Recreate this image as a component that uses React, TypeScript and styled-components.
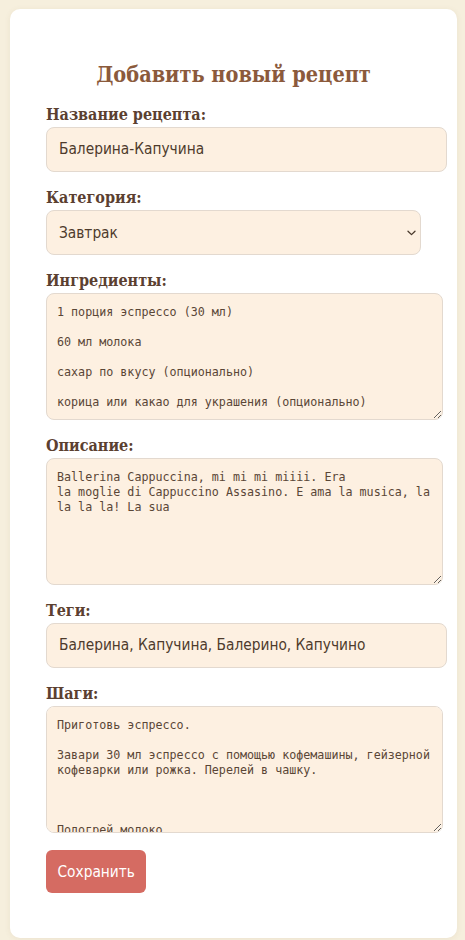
import React from "react";
import styled, { createGlobalStyle } from "styled-components";

const Global = createGlobalStyle`
  html, body { margin: 0; padding: 0; }
  body {
    background: #f6efdd;
    padding: 9px 8px 2px 10px;
    font-family: "DejaVu Serif", Georgia, serif;
  }
`;

const Card = styled.div`
  background: #ffffff;
  border-radius: 10px;
  box-shadow: 0 1px 6px rgba(120, 90, 40, 0.08);
  padding: 36px 36px 45px 36px;
`;

const Title = styled.h2`
  margin: 16px 0 16px 0;
  text-align: center;
  font-family: "DejaVu Serif Condensed", "DejaVu Serif", Georgia, serif;
  font-stretch: condensed;
  font-weight: bold;
  font-size: 21.5px;
  line-height: 28px;
  color: #8b5a3c;
`;

const Form = styled.form`
  display: flex;
  flex-direction: column;
  gap: 16px;
`;

const Field = styled.div`
  display: flex;
  flex-direction: column;
  align-items: flex-start;
  gap: 2px;
`;

const Label = styled.label`
  font-family: "DejaVu Serif Condensed", "DejaVu Serif", Georgia, serif;
  font-stretch: condensed;
  font-weight: bold;
  font-size: 16px;
  line-height: 20px;
  color: #5b4030;
`;

const controlBase = `
  background: #fdf0e1;
  border: 1px solid #e3d9cf;
  border-radius: 8px;
  color: #4e3b2c;
  outline: none;
  margin: 0;
`;

const TextInput = styled.input`
  ${controlBase}
  box-sizing: content-box;
  width: 100%;
  padding: 12px;
  height: 19px;
  font-family: "DejaVu Sans Condensed", "Liberation Sans", sans-serif;
  font-size: 15.3px;
  line-height: 19px;
`;

const SelectWrap = styled.div`
  position: relative;
  width: 100%;
`;

const Select = styled.select`
  ${controlBase}
  appearance: none;
  -webkit-appearance: none;
  box-sizing: border-box;
  display: block;
  width: 100%;
  height: 45px;
  padding: 0 24px 0 12px;
  font-family: "DejaVu Sans Condensed", "Liberation Sans", sans-serif;
  font-size: 15.3px;
`;

const Chevron = styled.svg`
  position: absolute;
  right: 5px;
  top: 20px;
  width: 9px;
  height: 6px;
  pointer-events: none;
`;

const TextArea = styled.textarea<{ $scroll?: boolean }>`
  ${controlBase}
  display: block;
  box-sizing: border-box;
  width: calc(100% + 22px);
  height: 127px;
  padding: 11px ${(p) => (p.$scroll ? "4px" : "10px")} 9px 10px;
  font-family: "DejaVu Sans Mono", "Liberation Mono", monospace;
  font-size: 11.7px;
  line-height: 15px;
  color: #5a4636;
  resize: vertical;
  overflow-y: ${(p) => (p.$scroll ? "scroll" : "auto")};

  &::-webkit-scrollbar {
    width: 6px;
  }
  &::-webkit-scrollbar-track {
    background: transparent;
    margin: 11px 0;
  }
  &::-webkit-scrollbar-thumb {
    background: #ddd1c3;
    border-radius: 2px;
    border-left: 2px solid transparent;
    border-right: 1px solid transparent;
    background-clip: padding-box;
  }
  &::-webkit-scrollbar-corner {
    background: transparent;
  }
`;

const SaveButton = styled.button`
  align-self: flex-start;
  margin-top: 1px;
  background: #d56b62;
  color: #ffffff;
  border: none;
  border-radius: 6px;
  height: 43px;
  padding: 0 11.5px;
  font-family: "DejaVu Sans Condensed", "Liberation Sans", sans-serif;
  font-size: 15.3px;
  cursor: pointer;
`;

const ingredients =
  "1 порция эспрессо (30 мл)\n\n60 мл молока\n\nсахар по вкусу (опционально)\n\nкорица или какао для украшения (опционально)";

const description =
  "Ballerina Cappuccina, mi mi mi miiii. Era\nla moglie di Cappuccino Assasino. E ama la musica, la la la la! La sua";

const steps = [
  "Приготовь эспрессо.",
  "",
  "Завари 30 мл эспрессо с помощью кофемашины, гейзерной кофеварки или рожка. Перелей в чашку.",
  "",
  "",
  "",
  "Подогрей молоко.",
  "",
  "Нагрей 60 мл молока до 60–65 °C, не доводя до кипения.",
  "",
  "",
  "",
  "Взбей молоко.",
  "",
  "Используй капучинатор, френч-пресс или венчик, чтобы получить густую пену.",
  "",
  "",
  "",
  "Соедини.",
  "",
  "Аккуратно влей горячее молоко в эспрессо, придерживая пену ложкой, затем выложи пену сверху.",
  "",
  "",
  "",
  "Добавь сахар.",
  "",
  "По желанию подсласти напиток и перемешай.",
  "",
  "",
  "",
  "Укрась.",
  "",
  "Посыпь корицей или какао. Подавай сразу.",
  "",
  "",
  "",
  "Наслаждайся.",
  "",
  "Ballerina Cappuccina готова! Mi mi mi miiii.",
  "",
  "",
  "",
  "",
  "",
  "",
  "",
  "",
  "",
  "",
  "",
  "",
  "",
  "",
  "",
  "",
].join("\n");

export default function App() {
  return (
    <>
      <Global />
      <Card>
        <Title>Добавить новый рецепт</Title>
        <Form onSubmit={(e) => e.preventDefault()}>
          <Field>
            <Label>Название рецепта:</Label>
            <TextInput defaultValue="Балерина-Капучина" spellCheck={false} />
          </Field>
          <Field>
            <Label>Категория:</Label>
            <SelectWrap>
              <Select defaultValue="Завтрак">
                <option>Завтрак</option>
                <option>Обед</option>
                <option>Ужин</option>
                <option>Десерт</option>
                <option>Напитки</option>
              </Select>
              <Chevron viewBox="0 0 9 6" fill="none">
                <path
                  d="M1 1.2 L4.5 4.6 L8 1.2"
                  stroke="#4a3a2c"
                  strokeWidth="1.3"
                  strokeLinecap="round"
                  strokeLinejoin="round"
                />
              </Chevron>
            </SelectWrap>
          </Field>
          <Field>
            <Label>Ингредиенты:</Label>
            <TextArea defaultValue={ingredients} />
          </Field>
          <Field>
            <Label>Описание:</Label>
            <TextArea defaultValue={description} />
          </Field>
          <Field>
            <Label>Теги:</Label>
            <TextInput
              defaultValue="Балерина, Капучина, Балерино, Капучино"
              spellCheck={false}
            />
          </Field>
          <Field>
            <Label>Шаги:</Label>
            <TextArea $scroll defaultValue={steps} />
          </Field>
          <SaveButton type="submit">Сохранить</SaveButton>
        </Form>
      </Card>
    </>
  );
}
